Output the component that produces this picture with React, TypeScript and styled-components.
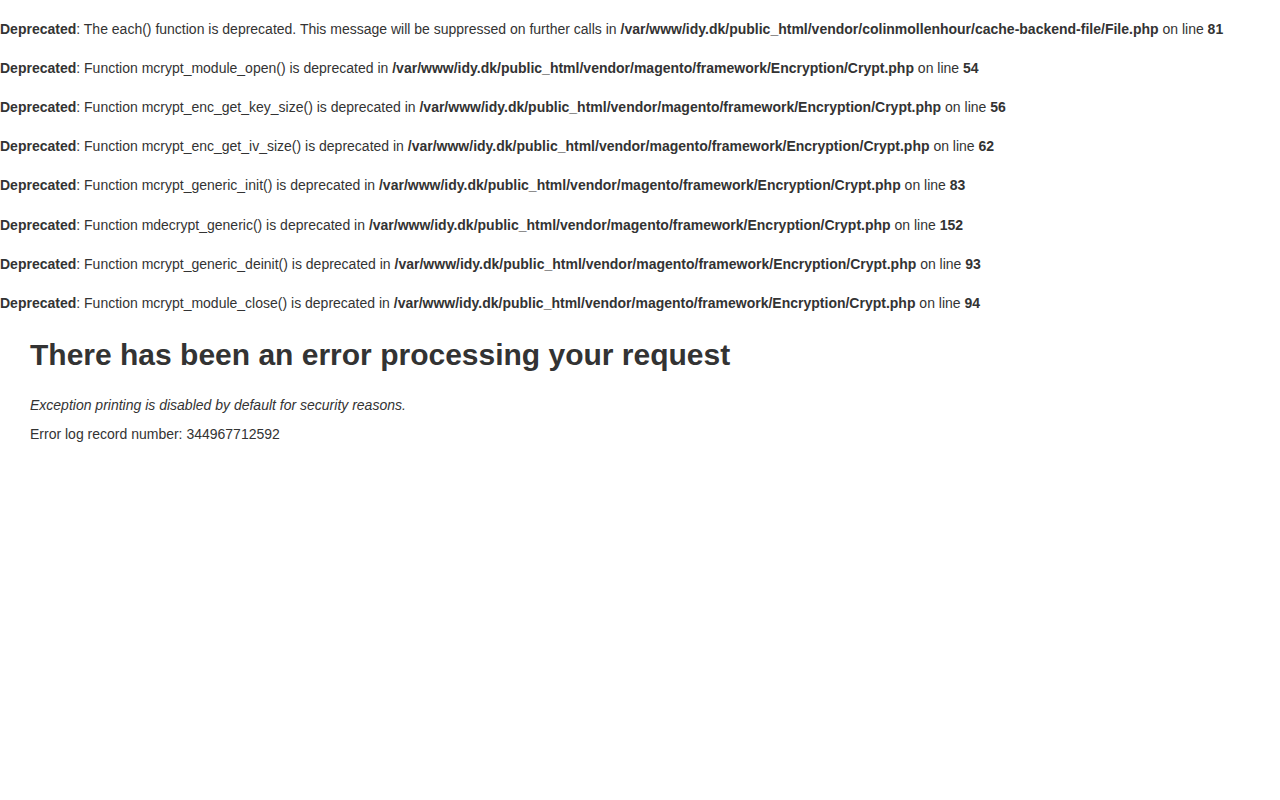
import React from 'react'
import styled, { createGlobalStyle } from 'styled-components'

const GlobalStyle = createGlobalStyle`
    body {
        margin: 0;
        background: #fff;
        color: #333;
        font-family: 'Liberation Sans', Arial, sans-serif;
        font-size: 14px;
        line-height: 1.4;
    }
`

const Notice = styled.div`
    padding-top: 19.6px;
    line-height: 19.6px;
    white-space: nowrap;
`

const Page = styled.div`
    padding: 0 30px;
`

const Title = styled.h1`
    margin: 23px 0 0;
    font-size: 30px;
    line-height: 36px;
    font-weight: 700;
`

const Text = styled.p<{ $italic?: boolean }>`
    margin: ${ p => p.$italic ? '23px' : '10px' } 0 0;
    font-style: ${ p => p.$italic ? 'italic' : 'normal' };
`

const cryptFile = '/var/www/idy.dk/public_html/vendor/magento/framework/Encryption/Crypt.php'

const notices = [
    { msg: 'The each() function is deprecated. This message will be suppressed on further calls', file: '/var/www/idy.dk/public_html/vendor/colinmollenhour/cache-backend-file/File.php', line: 81 },
    { msg: 'Function mcrypt_module_open() is deprecated', file: cryptFile, line: 54 },
    { msg: 'Function mcrypt_enc_get_key_size() is deprecated', file: cryptFile, line: 56 },
    { msg: 'Function mcrypt_enc_get_iv_size() is deprecated', file: cryptFile, line: 62 },
    { msg: 'Function mcrypt_generic_init() is deprecated', file: cryptFile, line: 83 },
    { msg: 'Function mdecrypt_generic() is deprecated', file: cryptFile, line: 152 },
    { msg: 'Function mcrypt_generic_deinit() is deprecated', file: cryptFile, line: 93 },
    { msg: 'Function mcrypt_module_close() is deprecated', file: cryptFile, line: 94 }
]

export default function App() {
    return (
        <>
            <GlobalStyle />
            { notices.map((n, i) => (
                <Notice key={ i }>
                    <b>Deprecated</b>: { n.msg } in <b>{ n.file }</b> on line <b>{ n.line }</b>
                </Notice>
            )) }
            <Page>
                <Title>There has been an error processing your request</Title>
                <Text $italic>Exception printing is disabled by default for security reasons.</Text>
                <Text>Error log record number: 344967712592</Text>
            </Page>
        </>
    )
}
